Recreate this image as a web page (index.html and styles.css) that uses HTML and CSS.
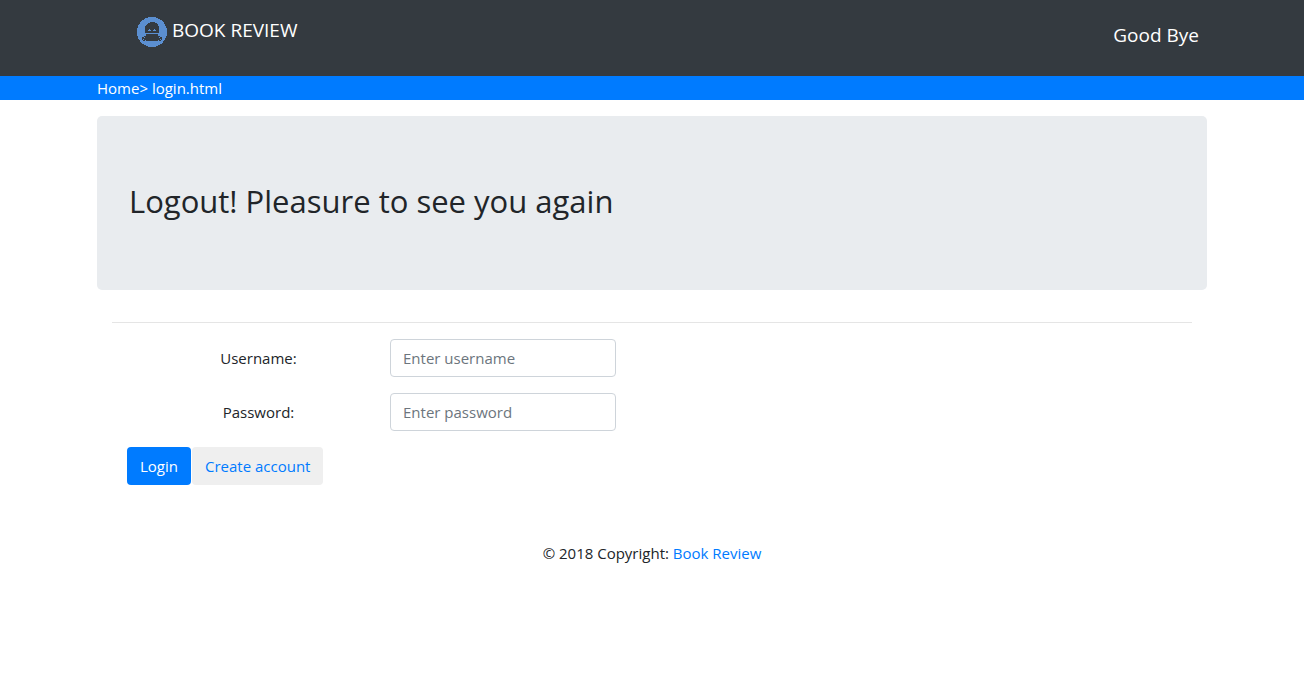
FILE: index.html
```html
<!DOCTYPE html>
<html lang="en">
<head>
<meta charset="utf-8">
<meta name="viewport" content="width=device-width, initial-scale=1">
<title>Book Review</title>
<link rel="stylesheet" href="styles.css">
</head>
<body>
<header class="navbar">
  <div class="container navbar-inner">
    <a class="brand" href="#">
      <svg class="brand-logo" viewBox="0 0 30 30" shape-rendering="crispEdges" aria-hidden="true">
        <circle cx="15" cy="15" r="15" fill="#5b8fd1"/>
        <g fill="#343a40">
          <path d="M11 6h2V5h5v1h2v1h1v2h1v7H8V9h1V8h1V7h1z"/>
          <path d="M9 17h12v2h2v1h2v3h-1v1H6v-1H5v-3h2v-1h2z"/>
        </g>
        <g fill="#5b8fd1">
          <path d="M12 12h1v1h1v1h-3v-1h1zM17 12h1v1h1v1h-3v-1h1z"/>
          <path d="M7 20h1v1H7zM22 20h1v1h-1zM6 22h1v1H6zM23 22h1v1h-1zM8 23h1v1H8zM21 23h1v1h-1z"/>
        </g>
      </svg>
      <span>BOOK REVIEW</span>
    </a>
    <span class="greeting">Good Bye</span>
  </div>
</header>
<nav class="crumbs" aria-label="Breadcrumb">
  <div class="container"><a href="#">Home</a>&gt; <a href="#">login.html</a></div>
</nav>
<main class="container">
  <section class="jumbotron"><h1>Logout! Pleasure to see you again</h1></section>
  <form class="login">
    <hr>
    <div class="field">
      <label for="username">Username:</label>
      <input id="username" type="text" placeholder="Enter username">
    </div>
    <div class="field">
      <label for="password">Password:</label>
      <input id="password" type="password" placeholder="Enter password">
    </div>
    <div class="actions">
      <button class="btn btn-primary" type="button">Login</button>
      <button class="btn btn-link" type="button">Create account</button>
    </div>
  </form>
</main>
<footer class="footer">© 2018 Copyright: <a href="#">Book Review</a></footer>
</body>
</html>
```
FILE: styles.css
```css
* { box-sizing: border-box; }
body {
  margin: 0;
  background: #fff;
  color: #212529;
  font: 15px/24px "Segoe UI", "Open Sans", sans-serif;
}
a { color: #007bff; text-decoration: none; }
.container { width: 100%; max-width: 1140px; margin: 0 auto; padding: 0 15px; }
.navbar { background: #343a40; padding: 8px 0 22px; color: #fff; }
.navbar-inner { display: flex; justify-content: space-between; align-items: flex-start; }
.brand {
  display: flex;
  gap: 5px;
  margin-left: 40px;
  padding-top: 8px;
  color: #fff;
  font-size: 19px;
  line-height: 28px;
}
.brand-logo { width: 30px; height: 30px; margin-top: 1px; }
.greeting { padding: 12px 8px 4px; font-size: 19px; line-height: 30px; }
.crumbs { background: #007bff; color: #fff; }
.crumbs a { color: #fff; }
.jumbotron {
  margin: 16px 0 32px;
  padding: 66px 32px 70px;
  border-radius: 5px;
  background: #e9ecef;
}
.jumbotron h1 { margin: 0; font-size: 31px; line-height: 38px; font-weight: 400; }
.login { padding: 0 15px; }
.login hr { margin: 0 0 16px; border: 0; border-top: 1px solid #e5e5e5; }
.field {
  display: grid;
  grid-template-columns: 263px 226px;
  align-items: center;
  margin: 0 15px 16px;
}
.field label { text-align: center; }
.field input {
  width: 100%;
  height: 38px;
  padding: 6px 12px;
  border: 1px solid #ced4da;
  border-radius: 4px;
  background: #fff;
  color: #495057;
  font: inherit;
}
.field input::placeholder { color: #6c757d; opacity: 1; }
.actions { display: flex; gap: 1px; padding: 0 15px; }
.btn {
  padding: 6px 12px;
  border: 1px solid transparent;
  border-radius: 4px;
  font: inherit;
  cursor: pointer;
}
.btn-primary { background: #007bff; color: #fff; }
.btn-link { background: #efefef; color: #007bff; }
.footer { padding: 56px 15px 16px; text-align: center; }
```
